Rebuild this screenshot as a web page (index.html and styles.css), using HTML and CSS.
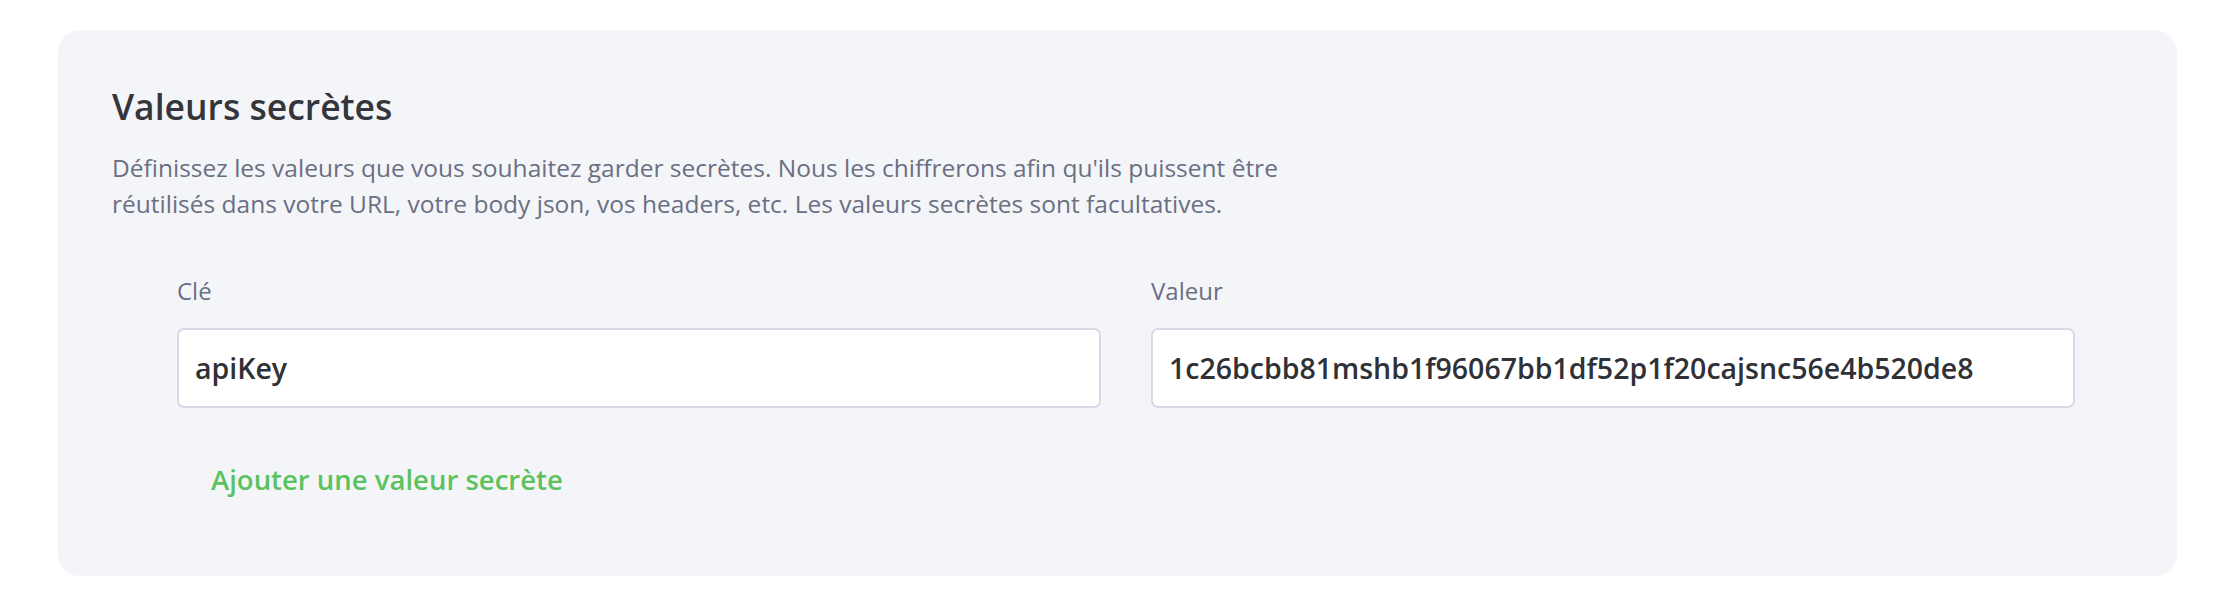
FILE: index.html
```html
<!DOCTYPE html>
<html lang="fr">
<head>
<meta charset="UTF-8">
<meta name="viewport" content="width=device-width, initial-scale=1.0">
<title>Valeurs secrètes</title>
<link rel="stylesheet" href="styles.css">
</head>
<body>

  <div class="page">
    <div class="card">
      <h2 class="card-title">Valeurs secrètes</h2>
      <p class="card-desc">Définissez les valeurs que vous souhaitez garder secrètes. Nous les chiffrerons afin qu'ils puissent être réutilisés dans votre URL, votre body json, vos headers, etc. Les valeurs secrètes sont facultatives.</p>

      <form class="secrets">
        <div class="secret-row">
          <div class="field">
            <label for="key-0">Clé</label>
            <input type="text" id="key-0" value="apiKey">
          </div>
          <div class="field">
            <label for="value-0">Valeur</label>
            <input type="text" id="value-0" value="1c26bcbb81mshb1f96067bb1df52p1f20cajsnc56e4b520de8">
          </div>
        </div>
        <a href="#" class="add-link">Ajouter une valeur secrète</a>
      </form>
    </div>
  </div>

</body>
</html>
```

FILE: styles.css
```css
* {
  box-sizing: border-box;
}

body {
  margin: 0;
  background: #ffffff;
  font-family: "Open Sans", "Lato", sans-serif;
}

.page {
  padding: 30px 51px 28px 58px;
}

.card {
  background-color: #f4f5f9;
  border-radius: 22px;
  padding: 56px 54px 78px 54px;
}

.card-title {
  margin: 0;
  font-size: 35.5px;
  line-height: 40px;
  font-weight: 600;
  color: #34363b;
}

.card-desc {
  margin: 24px 0 0 0;
  max-width: 1200px;
  font-size: 24.5px;
  line-height: 36px;
  color: #6b6f82;
}

.secrets {
  margin: 53px 48px 0 65px;
}

.secret-row {
  display: flex;
  gap: 50px;
}

.field {
  flex: 1;
  display: flex;
  flex-direction: column;
}

.field label {
  font-size: 24px;
  line-height: 32px;
  color: #6b6f82;
  margin-bottom: 21px;
}

.field input {
  height: 80px;
  width: 100%;
  margin: 0;
  padding: 0 16px;
  border: 2px solid #d8d9e5;
  border-radius: 7px;
  background: #ffffff;
  font-family: "Open Sans", "Lato", sans-serif;
  font-size: 28.5px;
  font-weight: 600;
  color: #2f3137;
  outline: none;
}

.add-link {
  display: inline-block;
  margin: 54px 0 0 34px;
  font-size: 27.5px;
  line-height: 36px;
  font-weight: 600;
  color: #5bc25f;
  text-decoration: none;
}
```
